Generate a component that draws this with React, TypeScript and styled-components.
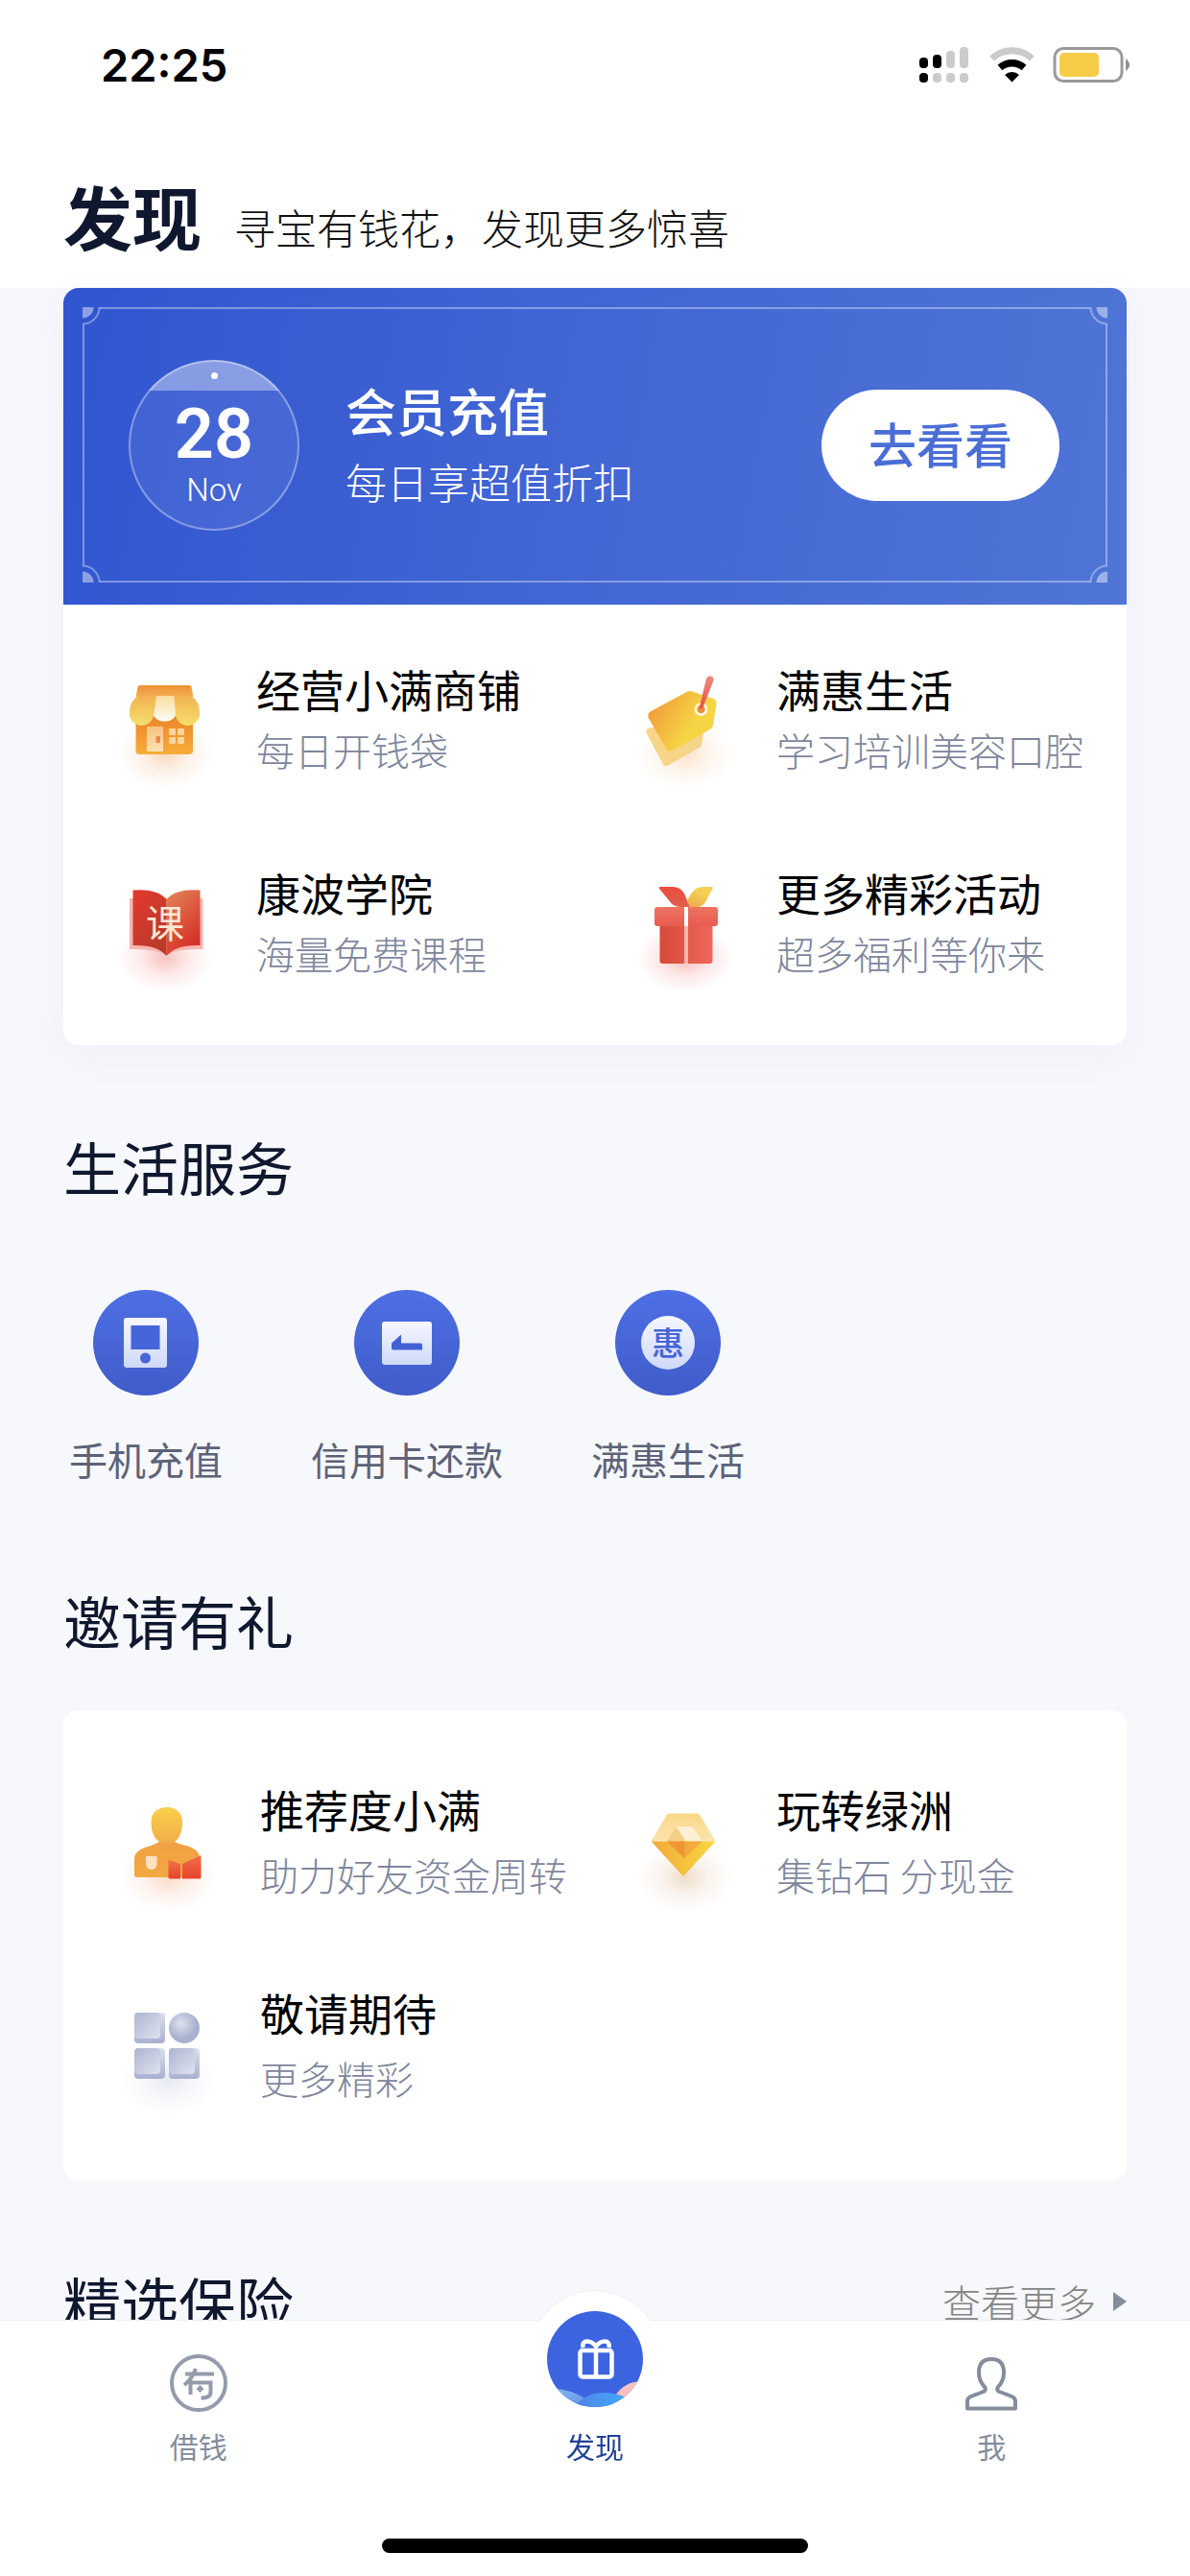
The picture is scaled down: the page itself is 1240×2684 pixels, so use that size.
import React from "react";
import styled, { createGlobalStyle } from "styled-components";

const GlobalStyle = createGlobalStyle`
  * { box-sizing: border-box; }
  body {
    margin: 0;
    background: #f7f8fc;
    color: #000;
    font-family: "Noto Sans CJK SC", "Noto Sans", sans-serif;
  }
  a { color: inherit; text-decoration: none; }
  h1, h2, h3, p { margin: 0; font-weight: 400; }
  button { font-family: inherit; border: 0; cursor: pointer; }
  svg { display: block; flex: none; }
`;

const Page = styled.div`
  min-height: 100vh;
  padding-bottom: 220px;
`;

const Header = styled.header`
  background: #fff;
`;

const StatusBar = styled.div`
  display: flex;
  align-items: center;
  justify-content: space-between;
  height: 136px;
  padding: 0 62px 0 105px;
`;

const Clock = styled.time`
  font: 600 47px/60px Inter, "Liberation Sans", sans-serif;
`;

const TitleRow = styled.div`
  display: flex;
  align-items: baseline;
  gap: 34px;
  height: 164px;
  padding: 36px 66px 0;
`;

const PageTitle = styled.h1`
  && { font-weight: 700; }
  font-size: 72px;
  line-height: 104px;
  color: #10182f;
`;

const PageSubtitle = styled.p`
  font-size: 43px;
  line-height: 60px;
  font-weight: 300;
  color: #111;
`;

const Main = styled.main`
  padding: 0 66px;
`;

const Card = styled.section`
  overflow: hidden;
  border-radius: 16px;
  background: #fff;
  box-shadow: 0 10px 40px ${(p: { $raised?: boolean }) => (p.$raised ? "rgba(70, 90, 180, 0.05)" : "transparent")};
`;

const Banner = styled.div`
  position: relative;
  display: flex;
  align-items: center;
  gap: 48px;
  height: 330px;
  padding: 0 70px 2px 68px;
  background: linear-gradient(100deg, #3155d0 0%, #4165d3 45%, #4f75d6 100%);
  color: #fff;
`;

const line = "rgba(255, 255, 255, 0.36)";
const fill = "rgba(255, 255, 255, 0.44)";
const corner = (at: string, pos: string) =>
  `radial-gradient(circle at ${at}, ${fill} 0 11px, transparent 12px 16px, ${line} 17px 18px, transparent 19px) ${pos} / 20px 20px no-repeat`;
const edge = (pos: string, size: string) => `linear-gradient(${line}, ${line}) ${pos} / ${size} no-repeat`;

const BannerFrame = styled.div`
  position: absolute;
  inset: 20px 20px 23px;
  pointer-events: none;
  background:
    ${corner("0 0", "0 0")},
    ${corner("100% 0", "100% 0")},
    ${corner("0 100%", "0 100%")},
    ${corner("100% 100%", "100% 100%")},
    ${edge("center top", "calc(100% - 36px) 2px")},
    ${edge("center bottom", "calc(100% - 36px) 2px")},
    ${edge("left center", "2px calc(100% - 36px)")},
    ${edge("right center", "2px calc(100% - 36px)")};
`;

const DateBadge = styled.time`
  display: flex;
  flex: none;
  flex-direction: column;
  align-items: center;
  width: 178px;
  height: 178px;
  overflow: hidden;
  border-radius: 50%;
  background: rgba(255, 255, 255, 0.07);
  box-shadow: inset 0 0 0 2px rgba(255, 255, 255, 0.36);
`;

const DateCap = styled.span`
  display: flex;
  align-items: center;
  justify-content: center;
  width: 100%;
  height: 32px;
  background: rgba(255, 255, 255, 0.36);
  &::after {
    content: "";
    width: 7px;
    height: 7px;
    border-radius: 50%;
    background: #fff;
  }
`;

const DateDay = styled.span`
  margin-top: 6px;
  font: 600 72px/80px Roboto, "Liberation Sans", sans-serif;
`;

const DateMonth = styled.span`
  font: 300 33px/36px Roboto, "Liberation Sans", sans-serif;
`;

const BannerText = styled.div`
  flex: 1;
`;

const BannerTitle = styled.h2`
  && { font-weight: 500; }
  font-size: 53px;
  line-height: 74px;
`;

const BannerSubtitle = styled.p`
  font-size: 43px;
  line-height: 74px;
  font-weight: 300;
`;

const BannerButton = styled.button`
  width: 248px;
  height: 116px;
  padding: 0 0 6px;
  border-radius: 58px;
  background: #fff;
  color: #4a6ed6;
  font-size: 50px;
  font-weight: 500;
`;

const FeatureGrid = styled.div<{ $roomy?: boolean }>`
  display: grid;
  grid-template-columns: 1fr 1fr;
  grid-auto-rows: 212px;
  padding: ${(p) => (p.$roomy ? "34px 16px 32px" : "16px 12px 19px")};
  --text-line: ${(p) => (p.$roomy ? "69px" : "64px")};
`;

const FeatureLink = styled.a`
  display: flex;
  align-items: center;
  gap: 35px;
  padding-left: 34px;
  white-space: nowrap;
`;

const FeatureText = styled.div`
  padding-bottom: 6px;
`;

const FeatureTitle = styled.h3`
  font-size: 46px;
  line-height: var(--text-line);
`;

const FeatureNote = styled.p`
  font-size: 40px;
  line-height: var(--text-line);
  font-weight: 300;
  color: #7e869c;
`;

const SectionHead = styled.div<{ $top: number; $bottom: number }>`
  display: flex;
  align-items: center;
  justify-content: space-between;
  padding: ${(p) => p.$top}px 0 ${(p) => p.$bottom}px;
`;

const SectionTitle = styled.h2`
  font-size: 60px;
  line-height: 84px;
  color: #10182f;
`;

const MoreLink = styled.a`
  display: flex;
  align-items: center;
  gap: 18px;
  font-size: 40px;
  font-weight: 300;
  color: #858585;
`;

const Services = styled.nav`
  display: flex;
  gap: 92px;
  padding: 0 6px;
`;

const ServiceLink = styled.a`
  display: flex;
  flex-direction: column;
  align-items: center;
  gap: 38px;
  font-size: 40px;
  line-height: 56px;
  color: #5d6377;
`;

const TabBar = styled.footer`
  position: fixed;
  right: 0;
  bottom: 0;
  left: 0;
  padding-bottom: 24px;
  border-top: 1px solid #ebecef;
  background: #fff;
`;

const TabBulge = styled.div`
  position: absolute;
  top: -32px;
  left: calc(50% - 69px);
  width: 138px;
  height: 138px;
  border: 1px solid #ebecef;
  border-radius: 50%;
  background: #fff;
  clip-path: inset(0 0 106px 0);
`;

const Tabs = styled.nav`
  display: flex;
`;

const Tab = styled.a<{ $active?: boolean }>`
  position: relative;
  display: flex;
  flex: 1;
  flex-direction: column;
  align-items: center;
  justify-content: flex-end;
  gap: ${(p) => (p.$active ? 20 : 15)}px;
  height: 150px;
  font-size: 30px;
  line-height: 40px;
  color: ${(p) => (p.$active ? "#234397" : "#858c9c")};
`;

const HomeIndicator = styled.div`
  width: 444px;
  height: 15px;
  margin: 77px auto 0;
  border-radius: 8px;
  background: #000;
`;

function StatusIcons() {
  return (
    <svg width="220" height="40" viewBox="0 0 220 40" aria-hidden="true">
      <g fill="#cbcbcb">
        <rect x="28" y="5" width="9" height="18" rx="4" />
        <rect x="42" y="1" width="9" height="22" rx="4" />
        <rect x="14" y="28" width="9" height="10" rx="4" />
        <rect x="28" y="28" width="9" height="10" rx="4" />
        <rect x="42" y="28" width="9" height="10" rx="4" />
      </g>
      <rect x="0" y="12" width="9" height="11" rx="4" />
      <rect x="14" y="9" width="9" height="14" rx="4" />
      <rect x="0" y="28" width="9" height="10" rx="4" />
      <path d="M75.500 13a31 31 0 0 1 42 0" fill="none" stroke="#cbcbcb" strokeWidth="7" />
      <path d="M84 22.500a19 19 0 0 1 25 0" fill="none" stroke="#000" strokeWidth="7.500" />
      <path d="M89 30a11 11 0 0 1 15 0l-7.500 7.500z" />
      <rect x="141" y="2.500" width="70" height="34" rx="9" fill="none" stroke="#999" strokeWidth="3" />
      <rect x="146" y="7" width="41" height="25" rx="5" fill="#f6cc46" />
      <path d="M215 13q8 6.500 0 13z" fill="#8f8f8f" />
    </svg>
  );
}

function Grad({ id, from, to, x2 = 0, y2 = 1 }: { id: string; from: string; to: string; x2?: number; y2?: number }) {
  return (
    <linearGradient id={id} x1="0" y1="0" x2={x2} y2={y2}>
      <stop offset="0" stopColor={from} />
      <stop offset="1" stopColor={to} />
    </linearGradient>
  );
}

function FeatureIcon({ id, glow, children }: { id: string; glow: string; children: React.ReactNode }) {
  return (
    <svg width="120" height="140" viewBox="0 0 120 140" aria-hidden="true">
      <radialGradient id={id}>
        <stop offset="0" stopColor={glow} stopOpacity="0.4" />
        <stop offset="0.5" stopColor={glow} stopOpacity="0.14" />
        <stop offset="1" stopColor={glow} stopOpacity="0" />
      </radialGradient>
      <ellipse cx="60" cy="104" rx="50" ry="36" fill={`url(#${id})`} />
      {children}
    </svg>
  );
}

function ShopIcon() {
  return (
    <FeatureIcon id="glowShop" glow="#f2a05e">
      <defs>
        <Grad id="shopRoof" from="#ee9133" to="#f3ad55" />
        <Grad id="shopAwning" from="#f2b152" to="#f6df6c" />
        <Grad id="shopStripe" from="#f8dc9c" to="#fffdf8" />
        <Grad id="shopWall" from="#ec812b" to="#f5ad38" />
        <Grad id="shopDoor" from="#f7c282" to="#fbe3b4" />
      </defs>
      <path d="M29.500 60h59.500v40a4 4 0 0 1-4 4h-51.500a4 4 0 0 1-4-4z" fill="url(#shopWall)" />
      <path d="M34 32h51q2 0 2.500 2l2 10h-60l2-10q.5-2 2.500-2z" fill="url(#shopRoof)" />
      <path d="M32 43h55q9 6 9 16a12.500 12.500 0 0 1-25 4.500a12.500 10 0 0 1-23 0a12.500 12.500 0 0 1-25-4.500q0-10 9-16z" fill="url(#shopAwning)" />
      <path d="M51 43h18.500l1.500 20.500a12.500 10 0 0 1-23 0z" fill="url(#shopStripe)" />
      <rect x="41" y="75" width="17" height="26" rx="1" fill="url(#shopDoor)" />
      <rect x="50.500" y="85" width="4.500" height="7" rx="1" fill="#ee8a45" />
      <g fill="#fbd59b">
        <rect x="64" y="77" width="7" height="7" rx="1" />
        <rect x="73" y="77" width="7" height="7" rx="1" />
        <rect x="64" y="86" width="7" height="7" rx="1" />
        <rect x="73" y="86" width="7" height="7" rx="1" />
      </g>
    </FeatureIcon>
  );
}

function TagIcon() {
  return (
    <FeatureIcon id="glowTag" glow="#f5b878">
      <defs>
        <Grad id="tagFront" from="#f09035" to="#f6d545" x2={0.75} y2={0.4} />
        <Grad id="tagString" from="#f08a86" to="#e9503f" />
      </defs>
      <path d="M21 77l56-12q4 0 3.500 5l-3 23q0 2-2 3.500l-33 19q-4 2-6-2l-17-32q-1-3 1.500-4.500z" fill="#f6d589" />
      <path d="M23.500 59.500l38-20.500q3-1.500 6-.500l22 7.500q3.500 1.500 3 5l-3.500 22.500q-.5 3-3 4.500l-39.500 22q-4 2-6-1.500l-18.500-32q-2-4.500 1.500-7z" fill="url(#tagFront)" />
      <circle cx="76.500" cy="57" r="5.500" fill="#e98f34" stroke="#fff" strokeWidth="2.500" />
      <path d="M82 25q2-3.500 5-2.500q3 1 2.500 4.500l-11 28q-1 2-2.500 1.500q-1.500-.5-1-2.500z" fill="url(#tagString)" />
    </FeatureIcon>
  );
}

function BookIcon() {
  return (
    <FeatureIcon id="glowBook" glow="#ec6a63">
      <defs>
        <Grad id="bookLeft" from="#e4392f" to="#b93a29" x2={0.6} />
        <Grad id="bookRight" from="#e2885a" to="#d62f26" x2={0.5} />
      </defs>
      <path d="M23 42h76.500v53q-25-1-38.500 6q-14-7-38-6z" fill="#f6b6b3" />
      <path d="M26.500 33.500q25-2 35 9.500v59q-10-12-35-11z" fill="url(#bookLeft)" />
      <path d="M96.500 33.500q-25-2-35 9.500v59q10-12 35-11z" fill="url(#bookRight)" />
      <text x="60" y="83" textAnchor="middle" fontSize="40" fill="#fde6d4">课</text>
    </FeatureIcon>
  );
}

function GiftIcon() {
  return (
    <FeatureIcon id="glowGift" glow="#e9534a">
      <defs>
        <Grad id="giftBox" from="#d84a3b" to="#ec675a" x2={1} y2={0} />
        <Grad id="giftLid" from="#ef7361" to="#e75b50" />
        <Grad id="giftLeafA" from="#e84c40" to="#e0604c" />
        <Grad id="giftLeafB" from="#f4d052" to="#ef9b52" x2={-0.5} />
      </defs>
      <path d="M34 30h13q8 0 12 7l6 14h-10q-8 0-12-7l-10-12q-1-2 1-2z" fill="url(#giftLeafA)" />
      <path d="M88 30h-9q-8 0-12 6l-5.500 9l4 6h6q7 0 10-6l7-13q1-2-.5-2z" fill="url(#giftLeafB)" />
      <path d="M33.500 69h55v38a3 3 0 0 1-3 3h-49a3 3 0 0 1-3-3z" fill="url(#giftBox)" />
      <rect x="28" y="51" width="66" height="20" rx="3" fill="url(#giftLid)" />
      <rect x="59" y="51" width="4" height="20" fill="#fff" />
      <rect x="59" y="71" width="4" height="39" fill="#f5b4ac" />
    </FeatureIcon>
  );
}

function PersonIcon() {
  return (
    <FeatureIcon id="glowPerson" glow="#f5a070">
      <defs>
        <Grad id="personHead" from="#f8d04b" to="#f2ac48" />
        <Grad id="personBody" from="#f0a044" to="#f2a941" />
        <Grad id="personRed" from="#f07048" to="#e8432c" />
      </defs>
      <path d="M51 66h14q3 3 13 5q14 4 14 13v20h-66q-2 0-2-2v-17q0-9 14-13q10-3 13-6z" fill="url(#personBody)" />
      <path d="M58 31c9 0 16 5 16 16c0 14-6 22-16 22s-16.500-8-16.500-22c0-11 7-16 16.500-16z" fill="url(#personHead)" />
      <path d="M36 82h11.500v8q0 5.500-6 6q-5.500-.5-5.500-6z" fill="#fde2bd" />
      <path d="M59.500 86l12.500 4v15.500h-11q-1.500 0-1.500-1.500z" fill="url(#personRed)" />
      <path d="M74 90l19.500-9v23q0 1.500-1.500 1.500h-18z" fill="url(#personRed)" />
    </FeatureIcon>
  );
}

function DiamondIcon() {
  return (
    <FeatureIcon id="glowDiamond" glow="#d8ac80">
      <defs>
        <Grad id="diamondTop" from="#f9d886" to="#fbe3ae" />
        <Grad id="diamondBottom" from="#f2a83a" to="#f8d83f" x2={1} y2={0} />
      </defs>
      <path d="M43 37.500h30q1.500 0 2.500 2l16 27h-67l16-27q1-2 2.500-2z" fill="url(#diamondTop)" />
      <path d="M24.500 66.500h67l-32 35q-1.500 2-3 0z" fill="url(#diamondBottom)" />
      <path d="M50.500 51h17l10 15.500h-36.500z" fill="#fdf0d4" />
      <path d="M50.500 51l10 15.500h-19.500z" fill="#f5cf85" />
      <path d="M41 66.500h36.500l-18.500 18z" fill="#f3ab3d" />
      <path d="M41 66.500h18.500v18z" fill="#f09835" />
    </FeatureIcon>
  );
}

function BlocksIcon() {
  return (
    <FeatureIcon id="glowBlocks" glow="#c3c8de">
      <defs>
        <Grad id="blockFace" from="#adb5d1" to="#dfe2ef" x2={1} />
        <Grad id="blockSide" from="#dcdfec" to="#a9b0cf" />
        <radialGradient id="blockBall" cx="0.4" cy="0.35">
          <stop offset="0" stopColor="#dfe2ec" />
          <stop offset="1" stopColor="#a9b1ce" />
        </radialGradient>
      </defs>
      {[[24, 33], [24, 70], [60, 70]].map(([x, y]) => (
        <g key={`${x}-${y}`}>
          <rect x={x} y={y} width="32" height="32" rx="4" fill="url(#blockSide)" />
          <rect x={x} y={y} width="27" height="27" rx="4" fill="url(#blockFace)" />
        </g>
      ))}
      <circle cx="76" cy="49" r="16" fill="url(#blockBall)" />
    </FeatureIcon>
  );
}

function ServiceIcon({ id, children }: { id: string; children: React.ReactNode }) {
  return (
    <svg width="110" height="110" viewBox="0 0 110 110" aria-hidden="true">
      <defs>
        <Grad id={id} from="#4e6fe4" to="#405cc9" />
        <Grad id={`${id}Face`} from="#f6f8ff" to="#cfd8f8" />
      </defs>
      <circle cx="55" cy="55" r="55" fill={`url(#${id})`} />
      {children}
    </svg>
  );
}

function PhoneIcon() {
  return (
    <ServiceIcon id="phone">
      <rect x="32" y="29" width="45" height="52" rx="3" fill="url(#phoneFace)" />
      <rect x="39.500" y="37" width="30" height="25" fill="#4565d9" />
      <circle cx="54.500" cy="71" r="5.500" fill="#4565d9" />
    </ServiceIcon>
  );
}

function RepayIcon() {
  return (
    <ServiceIcon id="repay">
      <rect x="29" y="33" width="52" height="45" rx="3" fill="url(#repayFace)" />
      <path d="M49 46.500v9h20q2 0 2 2v5h-30q-2 0-2-2v-5z" fill="#4262d4" />
    </ServiceIcon>
  );
}

function PerkIcon() {
  return (
    <ServiceIcon id="perk">
      <circle cx="55" cy="55" r="28" fill="url(#perkFace)" />
      <text x="55" y="68" textAnchor="middle" fontSize="34" fontWeight="500" fill="#4565d9">惠</text>
    </ServiceIcon>
  );
}

function LoanTabIcon() {
  return (
    <svg width="60" height="60" viewBox="0 0 60 60" aria-hidden="true">
      <g fill="none" stroke="#949bab" strokeWidth="4">
        <circle cx="30" cy="30" r="28" />
        <path d="M16 20.500h30M27 15q-4 11-12 17M21.500 27v15M21.500 29.500h21v10q0 6-10 6" />
      </g>
      <path d="M31.500 32l4 4-4 4-4-4z" fill="#949bab" />
    </svg>
  );
}

function DiscoverTabIcon() {
  return (
    <svg width="100" height="100" viewBox="0 0 100 100" aria-hidden="true">
      <defs>
        <clipPath id="discClip"><circle cx="50" cy="50" r="50" /></clipPath>
        <Grad id="waveA" from="#8fbaf0" to="#5c93e6" x2={1} />
        <Grad id="waveB" from="#5283e6" to="#3fa9fb" x2={1} y2={0} />
        <Grad id="waveC" from="#f9c6c8" to="#f6b1ae" />
      </defs>
      <g clipPath="url(#discClip)">
        <rect width="100" height="100" fill="#3c64e0" />
        <path d="M0 81q20-2 42 11v8h-42z" fill="url(#waveA)" />
        <path d="M71 88q10-15 29-15v27h-24z" fill="url(#waveC)" />
        <path d="M28 100q12-16 34-15q12 1 20 5v12h-54z" fill="url(#waveB)" />
      </g>
      <g fill="none" stroke="#fff" strokeWidth="4.500">
        <rect x="34.500" y="41" width="33" height="27.500" rx="2.500" />
        <path d="M51 41v27" />
        <path d="M37.500 38c-2-9 9-8 13.500-1c4.500-7 15.500-8 13.500 1" />
      </g>
    </svg>
  );
}

function ProfileTabIcon() {
  return (
    <svg width="60" height="60" viewBox="0 0 60 60" aria-hidden="true">
      <path
        d="M30 5c-9 0-13 5.500-13 14c0 7 2 11 6 15c1.500 2 1 4-1.500 5l-13 5q-3.500 1.500-3.500 5v7.500h50v-7.500q0-3.500-3.500-5l-13-5c-2.500-1-3-3-1.500-5c4-4 6-8 6-15c0-8.500-4-14-13-14z"
        fill="none"
        stroke="#858c9c"
        strokeWidth="4"
        strokeLinejoin="round"
      />
    </svg>
  );
}

type FeatureData = { title: string; note: string; Icon: () => React.ReactElement };

const benefits: FeatureData[] = [
  { title: "经营小满商铺", note: "每日开钱袋", Icon: ShopIcon },
  { title: "满惠生活", note: "学习培训美容口腔", Icon: TagIcon },
  { title: "康波学院", note: "海量免费课程", Icon: BookIcon },
  { title: "更多精彩活动", note: "超多福利等你来", Icon: GiftIcon },
];

const invites: FeatureData[] = [
  { title: "推荐度小满", note: "助力好友资金周转", Icon: PersonIcon },
  { title: "玩转绿洲", note: "集钻石 分现金", Icon: DiamondIcon },
  { title: "敬请期待", note: "更多精彩", Icon: BlocksIcon },
];

const services = [
  { label: "手机充值", Icon: PhoneIcon },
  { label: "信用卡还款", Icon: RepayIcon },
  { label: "满惠生活", Icon: PerkIcon },
];

function Features({ items, roomy }: { items: FeatureData[]; roomy?: boolean }) {
  return (
    <FeatureGrid $roomy={roomy}>
      {items.map(({ title, note, Icon }) => (
        <FeatureLink href="#" key={title}>
          <Icon />
          <FeatureText>
            <FeatureTitle>{title}</FeatureTitle>
            <FeatureNote>{note}</FeatureNote>
          </FeatureText>
        </FeatureLink>
      ))}
    </FeatureGrid>
  );
}

export default function App() {
  return (
    <Page lang="zh-CN">
      <GlobalStyle />
      <Header>
        <StatusBar>
          <Clock>22:25</Clock>
          <StatusIcons />
        </StatusBar>
        <TitleRow>
          <PageTitle>发现</PageTitle>
          <PageSubtitle>寻宝有钱花，发现更多惊喜</PageSubtitle>
        </TitleRow>
      </Header>

      <Main>
        <Card $raised>
          <Banner>
            <BannerFrame />
            <DateBadge dateTime="11-28">
              <DateCap />
              <DateDay>28</DateDay>
              <DateMonth>Nov</DateMonth>
            </DateBadge>
            <BannerText>
              <BannerTitle>会员充值</BannerTitle>
              <BannerSubtitle>每日享超值折扣</BannerSubtitle>
            </BannerText>
            <BannerButton type="button">去看看</BannerButton>
          </Banner>
          <Features items={benefits} />
        </Card>

        <SectionHead $top={84} $bottom={87}>
          <SectionTitle>生活服务</SectionTitle>
        </SectionHead>
        <Services>
          {services.map(({ label, Icon }) => (
            <ServiceLink href="#" key={label}>
              <Icon />
              {label}
            </ServiceLink>
          ))}
        </Services>

        <SectionHead $top={98} $bottom={52}>
          <SectionTitle>邀请有礼</SectionTitle>
        </SectionHead>
        <Card>
          <Features items={invites} roomy />
        </Card>

        <SectionHead $top={84} $bottom={0}>
          <SectionTitle>精选保险</SectionTitle>
          <MoreLink href="#">
            查看更多
            <svg width="14" height="20" viewBox="0 0 14 20" aria-hidden="true">
              <path d="M0 0l14 10-14 10z" fill="#858c9c" />
            </svg>
          </MoreLink>
        </SectionHead>
      </Main>

      <TabBar>
        <TabBulge />
        <Tabs>
          <Tab href="#">
            <LoanTabIcon />
            借钱
          </Tab>
          <Tab href="#" $active aria-current="page">
            <DiscoverTabIcon />
            发现
          </Tab>
          <Tab href="#">
            <ProfileTabIcon />
            我
          </Tab>
        </Tabs>
        <HomeIndicator />
      </TabBar>
    </Page>
  );
}
